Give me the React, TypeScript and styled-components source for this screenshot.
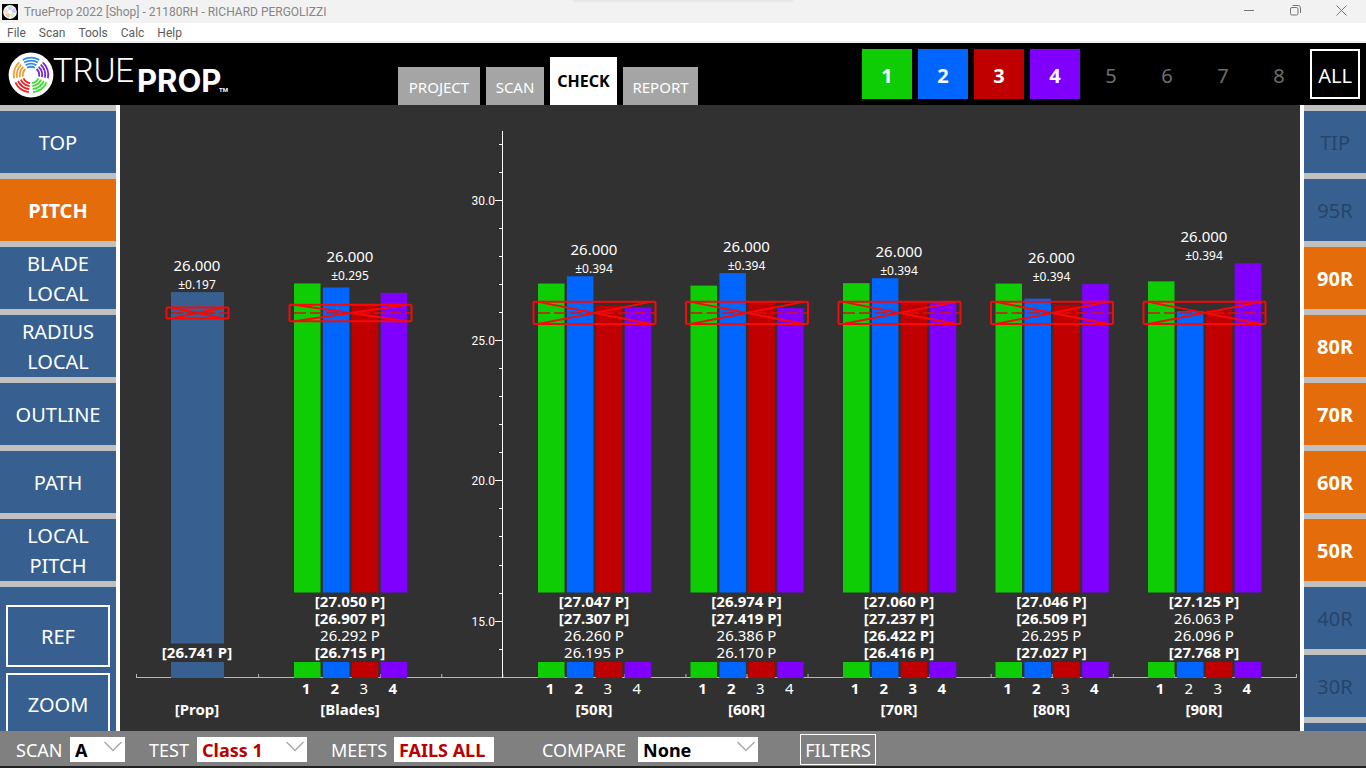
import React from 'react';
import styled, { createGlobalStyle, css } from 'styled-components';

const GlobalStyle = createGlobalStyle`
  *, *::before, *::after { box-sizing: border-box; }
  html, body { margin: 0; height: 100%; }
  #root { height: 100%; }
  body, button, select { font-family: 'Noto Sans', 'Open Sans', sans-serif; }
  button, select { margin: 0; border: 0; border-radius: 0; cursor: pointer; }
  svg { display: block; }
`;

const colors = {
  panel: '#376091',
  active: '#e46c0a',
  divider: '#c0c0c0',
  chart: '#313131',
  footer: '#808080',
  blades: ['#0fcd05', '#0066ff', '#c00000', '#8000ff'],
};

const Window = styled.div`
  display: flex;
  flex-direction: column;
  height: 100vh;
  overflow: hidden;
  background: #222;
`;

const TitleBar = styled.div`
  display: flex;
  align-items: center;
  flex: 0 0 23px;
  padding-left: 2px;
  background: linear-gradient(#e4e4e4, #f2f2f2) center top / 220px 3px no-repeat #f2f2f2;
  color: #868686;
  font-family: Roboto, sans-serif;
  font-size: 12px;
`;

const Title = styled.span`
  flex: 1;
  padding-left: 6px;
  white-space: nowrap;
`;

const WindowButton = styled.button`
  display: grid;
  place-items: center;
  width: 46px;
  height: 23px;
  padding: 0 4px 2px 0;
  background: transparent;
  color: #777;
`;

const MenuBar = styled.nav`
  display: flex;
  align-items: center;
  gap: 13px;
  flex: 0 0 20px;
  padding-left: 7px;
  border-bottom: 2px solid #eee;
  background: #fff;
`;

const MenuItem = styled.button`
  padding: 2px 0 0;
  background: none;
  color: #5c5c5c;
  font-family: Roboto, sans-serif;
  font-size: 12px;
  line-height: 16px;
`;

const Header = styled.header`
  display: flex;
  flex: 0 0 62px;
  background: #000;
`;

const Brand = styled.div`
  flex: 0 0 398px;
`;

const Tabs = styled.nav`
  display: flex;
  align-items: flex-end;
  gap: 6px;
  flex: 1;
`;

const Tab = styled.button<{ $width: number; $active?: boolean }>`
  width: ${p => p.$width}px;
  height: ${p => (p.$active ? 48 : 38)}px;
  padding: ${p => (p.$active ? 0 : 2)}px 0 0;
  background: ${p => (p.$active ? '#fff' : '#a5a5a5')};
  color: ${p => (p.$active ? '#000' : '#fff')};
  font-size: ${p => (p.$active ? 16 : 15)}px;
  font-weight: ${p => (p.$active ? 700 : 400)};
`;

const Blades = styled.div`
  display: flex;
  gap: 6px;
  padding: 6px 6px 0 0;
`;

const BladeButton = styled.button<{ $color?: string; $outlined?: boolean }>`
  width: 50px;
  height: 50px;
  padding: 4px 0 0;
  border: ${p => (p.$outlined ? '2px solid #fff' : '0')};
  background: ${p => p.$color ?? '#000'};
  color: ${p => (p.$color || p.$outlined ? '#fff' : '#6e6e6e')};
  font-size: 20px;
  line-height: 28px;
  font-weight: ${p => (p.$color ? 700 : 400)};
`;

const Body = styled.div`
  display: flex;
  flex: 1;
  min-height: 0;
`;

const sideEdge = css`
  display: flex;
  flex-direction: column;
  gap: 6px;
  padding-top: 6px;
  overflow: hidden;
  background: ${colors.divider};
`;

const LeftBar = styled.aside`
  ${sideEdge}
  flex: 0 0 120px;
  border-right: 4px solid #fff;
`;

const RightBar = styled.aside`
  ${sideEdge}
  flex: 0 0 66px;
  border-left: 4px solid #fff;
`;

const SideButton = styled.button<{ $active?: boolean }>`
  flex: 0 0 62px;
  padding: 2px 0 0;
  background: ${p => (p.$active ? colors.active : colors.panel)};
  color: #fff;
  font-size: 20px;
  line-height: 30px;
  font-weight: ${p => (p.$active ? 700 : 400)};
  white-space: pre-line;
  &:disabled { color: #274568; }
`;

const SideFill = styled.div`
  flex: 1;
  background: ${colors.panel};
`;

const SideTools = styled.div`
  display: flex;
  flex-direction: column;
  flex: 1 0 150px;
  gap: 6px;
  padding: 18px 6px 0;
  background: ${colors.panel};
`;

const ToolButton = styled(SideButton)`
  border: 2px solid #fff;
`;

const ChartPane = styled.main`
  display: flex;
  flex: 1;
  min-width: 0;
  background: ${colors.chart};
`;

const Chart = styled.svg`
  width: 100%;
  height: 100%;
  fill: #fff;
  font-family: 'Noto Sans', 'Open Sans', sans-serif;
  font-size: 15px;
  text-anchor: middle;
`;

const AxisLabel = styled.text`
  font-family: Roboto, sans-serif;
  font-size: 12px;
  text-anchor: end;
`;

const Footer = styled.footer`
  display: flex;
  align-items: center;
  flex: 0 0 35px;
  margin-bottom: 2px;
  padding-left: 16px;
  padding-top: 2px;
  background: ${colors.footer};
`;

const Field = styled.div<{ $label: number }>`
  display: grid;
  grid-template-columns: ${p => p.$label}px auto;
  align-items: center;
  margin-right: 24px;
  &:nth-child(3) { margin-right: 48px; }
  &:nth-child(4) { margin-right: 42px; }
`;

const FieldLabel = styled.label`
  padding-top: 2px;
  color: #fff;
  font-size: 18px;
  line-height: 23px;
`;

const SelectWrap = styled.span<{ $width: number }>`
  position: relative;
  display: flex;
  width: ${p => p.$width}px;
  svg { position: absolute; top: 4px; right: 3px; pointer-events: none; }
`;

const valueText = css<{ $alert?: boolean }>`
  height: 25px;
  padding: 2px 0 0 5px;
  background: #fff;
  color: ${p => (p.$alert ? '#b80000' : '#000')};
  font-size: 18px;
  line-height: 23px;
  font-weight: 700;
`;

const Select = styled.select<{ $alert?: boolean }>`
  ${valueText}
  width: 100%;
  appearance: none;
`;

const Result = styled.output<{ $alert?: boolean }>`
  ${valueText}
  width: 100px;
  white-space: nowrap;
`;

const FilterButton = styled.button`
  width: 76px;
  height: 31px;
  padding: 0;
  border: 1px solid #fff;
  background: none;
  color: #fff;
  font-size: 18px;
  line-height: 26px;
`;

const ringColors = ['#3488e8', '#7a22e0', '#3ddd35', '#ee2222', '#f09c30'];

function arc(r: number, middle: number, half: number) {
  const at = (deg: number) => {
    const a = (deg * Math.PI) / 180;
    return `${(r * Math.sin(a)).toFixed(2)} ${(-r * Math.cos(a)).toFixed(2)}`;
  };
  return `M${at(middle - half)}A${r} ${r} 0 0 1 ${at(middle + half)}`;
}

function Rings({ opacity = 1 }: { opacity?: number }) {
  return (
    <>
      <circle r="22.4" fill="#fff" />
      <g opacity={opacity}>
        {ringColors.map((color, i) =>
          [8.2, 11.2, 14.2, 17.2].map(r => (
            <path key={`${color}${r}`} d={arc(r, i * 72, 29)} fill="none" stroke={color} strokeWidth="1.8" />
          )),
        )}
      </g>
    </>
  );
}

function Logo() {
  return (
    <svg width="240" height="62" viewBox="0 0 240 62" role="img" aria-label="TrueProp">
      <g transform="translate(31 32)"><Rings /></g>
      <g fill="#fff" fontFamily="Roboto, sans-serif">
        <text x="53" y="39" fontSize="33" fontWeight="300">TRUE</text>
        <text x="137" y="49" fontSize="31" fontWeight="700" fontFamily="Inter, sans-serif">PROP</text>
        <text x="219" y="49" fontSize="6" fontWeight="700">TM</text>
      </g>
    </svg>
  );
}

function AppIcon() {
  return (
    <svg width="16" height="16" viewBox="-26 -26 52 52" aria-hidden="true">
      <rect x="-26" y="-26" width="52" height="52" fill="#000" />
      <Rings opacity={0.6} />
    </svg>
  );
}

const Chevron = () => (
  <svg width="18" height="11" viewBox="0 0 18 11" fill="none" stroke="#aaa" strokeWidth="1.5" aria-hidden="true">
    <path d="M0.5 1L9 9.5L17.5 1" />
  </svg>
);

interface Group {
  label: string;
  x: number;
  tolerance: number;
  values: [number, boolean][];
}

// Each value is paired with whether it falls out of tolerance.
const groups: Group[] = [
  { label: 'Blades', x: 294, tolerance: 0.295, values: [[27.05, true], [26.907, true], [26.292, false], [26.715, true]] },
  { label: '50R', x: 538, tolerance: 0.394, values: [[27.047, true], [27.307, true], [26.26, false], [26.195, false]] },
  { label: '60R', x: 690.5, tolerance: 0.394, values: [[26.974, true], [27.419, true], [26.386, false], [26.17, false]] },
  { label: '70R', x: 843, tolerance: 0.394, values: [[27.06, true], [27.237, true], [26.422, true], [26.416, true]] },
  { label: '80R', x: 995.5, tolerance: 0.394, values: [[27.046, true], [26.509, true], [26.295, false], [27.027, true]] },
  { label: '90R', x: 1148, tolerance: 0.394, values: [[27.125, true], [26.063, false], [26.096, false], [27.768, true]] },
];

const TARGET = 26;
const yOf = (v: number) => 341 - (v - 25) * 28.07;

function Tolerance({ x, width, tolerance }: { x: number; width: number; tolerance: number }) {
  const top = yOf(TARGET + tolerance);
  const bottom = yOf(TARGET - tolerance);
  const mid = yOf(TARGET);
  return (
    <g fill="none" stroke="#fa0808" strokeWidth="2">
      <rect x={x - 4.5} y={top} width={width + 8} height={bottom - top} rx="1" />
      <path d={`M${x} ${top}L${x + width - 1} ${bottom}M${x} ${bottom}L${x + width - 1} ${top}`} />
      <path d={`M${x} ${mid}H${x + width + 3}`} strokeDasharray="12 4" strokeWidth="1.5" stroke="#d81010" />
    </g>
  );
}

function Target({ x, top, tolerance }: { x: number; top: number; tolerance: number }) {
  return (
    <>
      <text x={x} y={top - 21}>{TARGET.toFixed(3)}</text>
      <text x={x} y={top - 3} fontSize="12">±{tolerance.toFixed(3)}</text>
    </>
  );
}

function BarGroup({ label, x, tolerance, values }: Group) {
  const center = x + 56;
  const top = yOf(Math.max(...values.map(v => v[0])));
  return (
    <g>
      {values.map(([value, out], i) => {
        const left = x + i * 28.9;
        const y = yOf(value);
        const weight = out ? 700 : 400;
        const reading = `${value.toFixed(3)} P`;
        return (
          <g key={i}>
            <rect x={left} y={y} width="26.5" height={592.5 - y} fill={colors.blades[i]} />
            <rect x={left} y="662" width="26.5" height="16" fill={colors.blades[i]} />
            <text x={center} y={607 + i * 17} fontWeight={weight}>{out ? `[${reading}]` : reading}</text>
            <text x={left + 12} y="694" fontWeight={weight}>{i + 1}</text>
          </g>
        );
      })}
      <Tolerance x={x} width={114} tolerance={tolerance} />
      <Target x={center} top={top} tolerance={tolerance} />
      <text x={center} y="715" fontWeight="700">[{label}]</text>
    </g>
  );
}

function PitchChart() {
  const yTicks = Array.from({ length: 19 }, (_, i) => 14 + i);
  const xTicks = Array.from({ length: 20 }, (_, i) => 136.5 + i * 61.05);
  return (
    <Chart viewBox="120 105 1180 626" role="img" aria-label="Pitch readings by blade and radius">
      <path
        d={`M136 677.5H1297${xTicks.map(x => `M${x} 678V674`).join('')}`}
        stroke="#b8b8b8"
        fill="none"
      />
      <path
        d={`M502.5 131V678${yTicks.map(v => `M${v % 5 ? 499 : 495} ${Math.round(yOf(v)) - 0.5}H502`).join('')}`}
        stroke="#fff"
        fill="none"
      />
      {[30, 25, 20, 15].map(v => (
        <AxisLabel key={v} x="495" y={yOf(v) + 4}>{v.toFixed(1)}</AxisLabel>
      ))}
      <rect x="171" y={yOf(26.741)} width="53" height={643.5 - yOf(26.741)} fill={colors.panel} />
      <rect x="171" y="662" width="53" height="16" fill={colors.panel} />
      <Tolerance x={171} width={54} tolerance={0.197} />
      <Target x={197} top={yOf(26.741)} tolerance={0.197} />
      <text x="197" y="658" fontWeight="700">[26.741 P]</text>
      <text x="197" y="715" fontWeight="700">[Prop]</text>
      {groups.map(g => <BarGroup key={g.label} {...g} />)}
    </Chart>
  );
}

const views = ['TOP', 'PITCH', 'BLADE\nLOCAL', 'RADIUS\nLOCAL', 'OUTLINE', 'PATH', 'LOCAL\nPITCH'];
const radii = ['TIP', '95R', '90R', '80R', '70R', '60R', '50R', '40R', '30R'];
const measured = ['90R', '80R', '70R', '60R', '50R'];

export default function App() {
  return (
    <Window>
      <GlobalStyle />
      <TitleBar>
        <AppIcon />
        <Title>TrueProp 2022 [Shop] - 21180RH - RICHARD PERGOLIZZI</Title>
        <WindowButton aria-label="Minimize">
          <svg width="11" height="11" stroke="currentColor"><path d="M0 5.5H10" /></svg>
        </WindowButton>
        <WindowButton aria-label="Restore">
          <svg width="11" height="11" fill="none" stroke="currentColor">
            <rect x="0.5" y="2.5" width="7.5" height="7.5" rx="1.5" />
            <path d="M2.5 0.5H8Q10.5 0.5 10.5 3V8" />
          </svg>
        </WindowButton>
        <WindowButton aria-label="Close">
          <svg width="11" height="11" stroke="currentColor"><path d="M0.5 0.5L10.5 10.5M10.5 0.5L0.5 10.5" /></svg>
        </WindowButton>
      </TitleBar>
      <MenuBar>
        {['File', 'Scan', 'Tools', 'Calc', 'Help'].map(m => <MenuItem key={m}>{m}</MenuItem>)}
      </MenuBar>
      <Header>
        <Brand><Logo /></Brand>
        <Tabs>
          <Tab $width={82}>PROJECT</Tab>
          <Tab $width={58}>SCAN</Tab>
          <Tab $width={67} $active>CHECK</Tab>
          <Tab $width={75}>REPORT</Tab>
        </Tabs>
        <Blades>
          {[1, 2, 3, 4, 5, 6, 7, 8].map(n => (
            <BladeButton key={n} $color={colors.blades[n - 1]}>{n}</BladeButton>
          ))}
          <BladeButton $outlined>ALL</BladeButton>
        </Blades>
      </Header>
      <Body>
        <LeftBar>
          {views.map(v => <SideButton key={v} $active={v === 'PITCH'}>{v}</SideButton>)}
          <SideTools>
            <ToolButton>REF</ToolButton>
            <ToolButton>ZOOM</ToolButton>
          </SideTools>
        </LeftBar>
        <ChartPane><PitchChart /></ChartPane>
        <RightBar>
          {radii.map(r => (
            <SideButton key={r} $active={measured.includes(r)} disabled={!measured.includes(r)}>{r}</SideButton>
          ))}
          <SideFill />
        </RightBar>
      </Body>
      <Footer>
        <Field $label={54}>
          <FieldLabel htmlFor="scan">SCAN</FieldLabel>
          <SelectWrap $width={55}><Select id="scan"><option>A</option></Select><Chevron /></SelectWrap>
        </Field>
        <Field $label={48}>
          <FieldLabel htmlFor="test">TEST</FieldLabel>
          <SelectWrap $width={110}><Select id="test" $alert><option>Class 1</option></Select><Chevron /></SelectWrap>
        </Field>
        <Field $label={63}>
          <FieldLabel htmlFor="meets">MEETS</FieldLabel>
          <Result id="meets" $alert>FAILS ALL</Result>
        </Field>
        <Field $label={96}>
          <FieldLabel htmlFor="compare">COMPARE</FieldLabel>
          <SelectWrap $width={120}><Select id="compare"><option>None</option></Select><Chevron /></SelectWrap>
        </Field>
        <FilterButton>FILTERS</FilterButton>
      </Footer>
    </Window>
  );
}
